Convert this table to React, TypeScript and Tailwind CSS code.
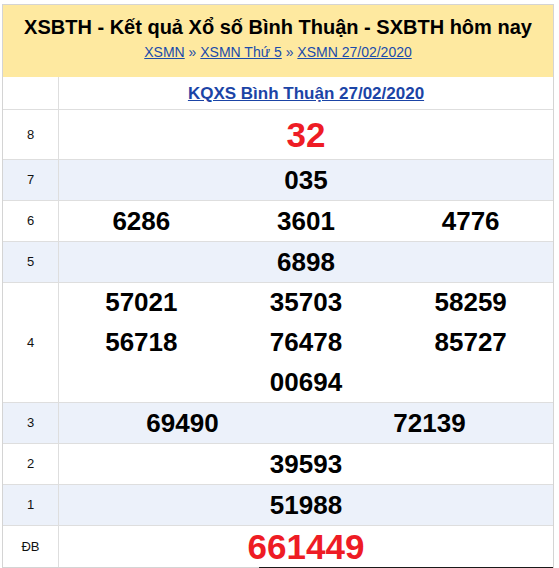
import React from "react";

type RowProps = {
  label: string;
  h: string;
  blue?: boolean;
  children: React.ReactNode;
  last?: boolean;
};

function Row({ label, h, blue, children, last }: RowProps) {
  return (
    <div className={`flex ${h} ${blue ? "bg-[#ecf1fa]" : "bg-white"} ${last ? "" : "border-b border-[#dedede]"}`}>
      <div className="w-[56px] shrink-0 border-r border-[#dedede] flex items-center justify-center text-[13px] text-[#111]">
        {label}
      </div>
      <div className="flex-1 flex flex-col justify-center">{children}</div>
    </div>
  );
}

function Nums({ items, cols }: { items: string[]; cols: number }) {
  return (
    <div className={`grid ${cols === 3 ? "grid-cols-3" : cols === 2 ? "grid-cols-2" : "grid-cols-1"}`}>
      {items.map((n, i) => (
        <div key={i} className="h-[40px] flex items-center justify-center text-[26px] font-bold text-black leading-none pb-[1px]">
          {n}
        </div>
      ))}
    </div>
  );
}

export default function App() {
  return (
    <div className="w-[559px] h-[568px] overflow-hidden bg-white" style={{ fontFamily: '"Liberation Sans", Arial, sans-serif' }}>
      <div className="ml-[2px] mt-[4px] w-[552px] border-t border-l border-r border-[#d4d4d4]">
        <div className="h-[72px] bg-[#fee9a0] flex flex-col items-center pt-[9px]">
          <div className="text-[20px] font-bold text-black leading-[26px]">
            XSBTH - Kết quả Xổ số Bình Thuận - SXBTH hôm nay
          </div>
          <div className="text-[14px] leading-[18px] mt-[3px] text-[#1a4bab]">
            <span className="underline">XSMN</span> » <span className="underline">XSMN Thứ 5</span> » <span className="underline">XSMN 27/02/2020</span>
          </div>
        </div>
        <Row label="" h="h-[33px]">
          <div className="text-center text-[17px] font-bold text-[#1b44a6] underline leading-none">
            KQXS Bình Thuận 27/02/2020
          </div>
        </Row>
        <Row label="8" h="h-[50px]">
          <div className="text-center text-[35px] font-bold text-[#ee1c25] leading-none">32</div>
        </Row>
        <Row label="7" h="h-[41px]" blue>
          <Nums items={["035"]} cols={1} />
        </Row>
        <Row label="6" h="h-[41px]">
          <Nums items={["6286", "3601", "4776"]} cols={3} />
        </Row>
        <Row label="5" h="h-[41px]" blue>
          <Nums items={["6898"]} cols={1} />
        </Row>
        <Row label="4" h="h-[120px]">
          <Nums items={["57021", "35703", "58259", "56718", "76478", "85727"]} cols={3} />
          <Nums items={["00694"]} cols={1} />
        </Row>
        <Row label="3" h="h-[41px]" blue>
          <Nums items={["69490", "72139"]} cols={2} />
        </Row>
        <Row label="2" h="h-[41px]">
          <Nums items={["39593"]} cols={1} />
        </Row>
        <Row label="1" h="h-[41px]" blue>
          <Nums items={["51988"]} cols={1} />
        </Row>
        <Row label="ĐB" h="h-[41px]" last>
          <div className="text-center text-[35px] font-bold text-[#ee1c25] leading-none">661449</div>
        </Row>
        <div className="flex h-[1px]">
          <div className="w-[256px] bg-[#d4d4d4]" />
          <div className="flex-1 bg-[#1a1a1a]" />
        </div>
      </div>
    </div>
  );
}
